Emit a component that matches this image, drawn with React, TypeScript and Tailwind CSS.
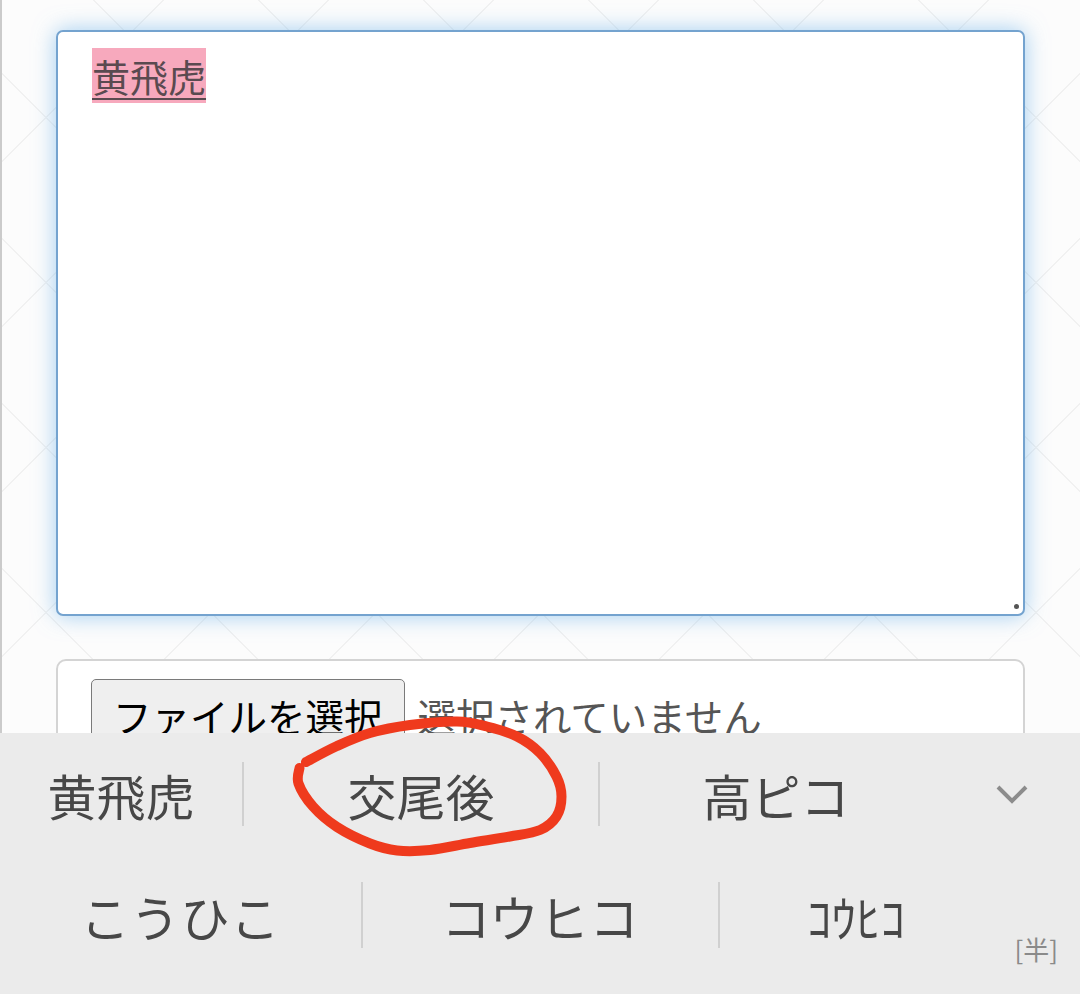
import React from "react";

const pts: [number, number][] = [
  [306, 762], [337, 746], [370, 733], [410, 725], [457, 721.5], [487, 726.5],
  [517, 736.5], [540, 753], [556.5, 776.5], [561.5, 796.5], [556.5, 816.5],
  [540, 830], [510, 836.5], [470, 843], [430, 850], [397, 850.5], [370, 843.5],
  [337, 827], [313, 806.5], [298.5, 783.5], [299.5, 768],
];

function catmull(p: [number, number][]) {
  let d = `M${p[0][0]},${p[0][1]}`;
  for (let i = 0; i < p.length - 1; i++) {
    const p0 = p[i - 1] || p[i];
    const p1 = p[i];
    const p2 = p[i + 1];
    const p3 = p[i + 2] || p2;
    const c1x = p1[0] + (p2[0] - p0[0]) / 6;
    const c1y = p1[1] + (p2[1] - p0[1]) / 6;
    const c2x = p2[0] - (p3[0] - p1[0]) / 6;
    const c2y = p2[1] - (p3[1] - p1[1]) / 6;
    d += ` C${c1x},${c1y} ${c2x},${c2y} ${p2[0]},${p2[1]}`;
  }
  return d;
}

const Sep = ({ h }: { h: string }) => <div className={`w-[2px] bg-[#d0d0d0] ${h}`} />;

export default function App() {
  return (
    <div className="relative w-[1080px] h-[994px] flex flex-col overflow-hidden font-['Noto_Sans_CJK_JP','Noto_Sans',sans-serif]">
      {/* page area */}
      <div className="h-[733px] shrink-0 overflow-hidden border-l-2 border-[#cbcbcb] bg-[#fcfcfc] bg-[repeating-linear-gradient(45deg,transparent_0px,transparent_115.5px,#f1f1f1_115.5px,#f1f1f1_116.7px),repeating-linear-gradient(-45deg,transparent_0px,transparent_115.5px,#f1f1f1_115.5px,#f1f1f1_116.7px)]">
        <div className="pl-[54px] pr-[55px] pt-[30px]">
          <div className="relative h-[586px] rounded-[7px] border-2 border-[#74a3cf] bg-white shadow-[0_0_22px_rgba(102,175,233,0.6)] pl-[34px] pt-[16px]">
            <div className="text-[38px] leading-[55px] text-[#5a4a50]">
              <span className="bg-[#f7a9bd] underline decoration-2 decoration-[#5a4a50] underline-offset-[6px]">黄飛虎</span>
            </div>
            <div className="absolute right-[4px] bottom-[5px] w-[5px] h-[5px] rounded-full bg-[#555]" />
          </div>
          <div className="mt-[43px] h-[200px] rounded-[10px] border-2 border-[#d4d4d4] bg-white pl-[33px] pt-[18px] flex items-start">
            <div className="rounded-[5px] border border-[#7a7a7a] bg-[#efefef] px-[21px] pt-[7px] h-[80px] text-[38.5px] leading-[56px] text-black">
              ファイルを選択
            </div>
            <div className="ml-[13px] pt-[8px] text-[38.5px] leading-[56px] text-[#555]">選択されていません</div>
          </div>
        </div>
      </div>

      {/* keyboard candidate bar */}
      <div className="relative flex-1 bg-[#ebebeb] text-[#474747]">
        <div className="h-[122px] flex items-center">
          <div className="w-[242px] text-center text-[49px] leading-none">黄飛虎</div>
          <Sep h="h-[64px]" />
          <div className="w-[354px] text-center text-[49px] leading-none">交尾後</div>
          <Sep h="h-[64px]" />
          <div className="w-[352px] text-center text-[49px] leading-none">高ピコ</div>
          <div className="flex-1 flex justify-center items-center pr-[8px]">
            <svg width="34" height="22" viewBox="0 0 34 22">
              <polyline points="3,4 17,18 31,4" fill="none" stroke="#8c8c8c" strokeWidth="4" />
            </svg>
          </div>
        </div>
        <div className="h-[120px] flex items-center">
          <div className="w-[361px] text-center text-[49px] leading-none tracking-[1px]">こうひこ</div>
          <Sep h="h-[66px]" />
          <div className="w-[355px] text-center text-[49px] leading-none tracking-[1px]">コウヒコ</div>
          <Sep h="h-[66px]" />
          <div className="w-[272px] text-center text-[49px] leading-none">ｺｳﾋｺ</div>
        </div>
        <div className="absolute right-[22px] bottom-[32px] text-[26px] leading-none text-[#8a8a8a]">[半]</div>
      </div>

      {/* hand-drawn annotation */}
      <svg className="absolute inset-0 pointer-events-none" width="1080" height="994" viewBox="0 0 1080 994">
        <path d={catmull(pts)} fill="none" stroke="#ef3a1d" strokeWidth="10" strokeLinecap="round" strokeLinejoin="round" />
      </svg>
    </div>
  );
}
